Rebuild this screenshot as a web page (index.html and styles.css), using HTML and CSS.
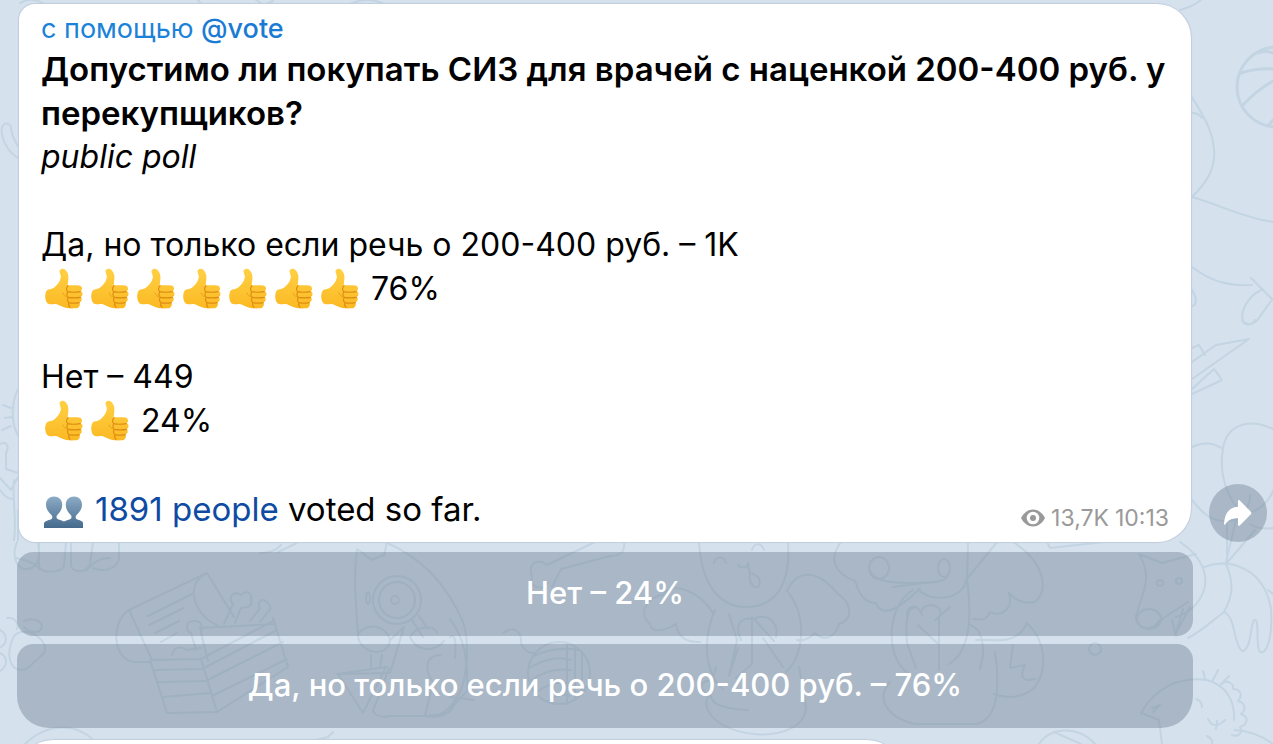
FILE: index.html
```html
<!DOCTYPE html>
<html lang="ru">
<head>
    <meta charset="UTF-8">
    <meta name="viewport" content="width=device-width, initial-scale=1.0">
    <title>Public poll</title>
    <link rel="stylesheet" href="styles.css">
</head>
<body>
    <!-- shared emoji -->
    <svg class="sprite" aria-hidden="true">
        <defs>
            <linearGradient id="skin" x1="0" y1="0" x2="0" y2="1">
                <stop offset="0" stop-color="#ffd044"/>
                <stop offset="1" stop-color="#fbb923"/>
            </linearGradient>
            <linearGradient id="bust" x1="0" y1="0" x2="0" y2="1">
                <stop offset="0" stop-color="#8cabc5"/>
                <stop offset="1" stop-color="#456a8d"/>
            </linearGradient>
            <symbol id="thumb" viewBox="0 1 46 44">
                <path fill="url(#skin)" d="M18.500 6c-.4-3 3.500-4.400 6-2 3 3 3.400 7 2.600 11.500l-.4 3.800h9.600c2.800 0 4.700 1.200 4.700 3.200 0 1.300-.6 2.200-1.500 2.800 1.700.7 2 1.800 2 3s-.8 2.400-2 2.800c1 .8 1.400 1.600 1.200 2.700-.2 1.400-1.200 2.300-2.500 2.600.7.6.9 1.400.6 2.500-.4 2-2 3.400-4.400 3.400-4.800.2-10 .2-14-2.100-3-1.400-4-2.500-6.600-2.300-3 .2-5.600.7-7.300-.7-2.800-2.500-3-10-.7-12.700 1.600-1.700 4.500-.7 6.700-2.400 3.300-2.500 6.500-6.300 7.300-10.400.4-2.200-.9-3.800-1.300-6z"/>
                <path fill="none" stroke="#de8d12" stroke-width="1.200" stroke-linecap="round" d="M27 20c-1.800 1.500-2 4.300-.2 5.700 3 .6 9 .5 12.400 0M27 25.700c-1.500 1.500-1.500 4.300.3 5.600 3.500.6 9 .5 12.200 0M27.300 31.300c-1.300 1.500-1 4 .6 5.300 3 .6 7.500.6 10.300 0M28 36.600c-.7 2-.2 3.600 1 4.800"/>
                <path fill="none" stroke="#eda21a" stroke-linecap="round" d="M22 27c1 2.500 2.500 3.500 4.200 4"/>
            </symbol>
            <symbol id="busts" viewBox="0 1 46 44">
                <path fill="url(#bust)" d="M3 42v-5c1-2.500 6-2.600 8-4.500.7-.9.3-2.500-.5-3.600C7.500 26.500 5 23 5 18.500 5 13.500 8.500 10.500 13 10.500s8.200 3 8.200 8c0 4.500-2 7.600-5 10.500-.8 1-1 2.800-.2 3.600 1.700 1.400 4.700 1.700 7 2.900 2.300-1.200 5.300-1.500 7-2.900.8-.8.6-2.600-.2-3.600-3-3-5-6-5-10.500 0-5 3.700-8 8.200-8s8 3 8 8c0 4.500-2.500 8-5.500 10.400-.8 1.100-1.200 2.700-.5 3.600 2 1.900 7 2 7 4.500v5z"/>
            </symbol>
        </defs>
    </svg>

    <!-- wallpaper doodles -->
    <svg class="wallpaper" viewBox="0 0 1273 744" preserveAspectRatio="xMidYMid slice" aria-hidden="true">
        <g class="doodle">
            <!-- top edge -->
            <path d="M20 3q14-8 28 4M198 0q5 8 14 4M256 0l8 5 9-4M350 4q18-8 34 0M1180 10q12-3 21-10"/>
            <!-- left edge -->
            <path d="M20 159C8 153 0 138 2 127c3-7 10-2 9 2 1 7 4 13 9 20M20 386c-9 13-10 38-1 51M3 405l8 3M5 418l7-1M2 430l9-4M0 444c8-4 9 4 6 9v16l12 4M0 478l11 12 7-13M0 490q6 9 13 9M14 480c-2 20 3 40 0 60M18 510v30"/>
            <!-- ball -->
            <circle class="bold" cx="1277" cy="87" r="40"/>
            <path class="bold" d="M1241 73q16-5 32-4M1243 105q13-14 30-24M1258 53q8-3 15 0M1269 125l4-5"/>
            <!-- shark -->
            <path d="M1191 96c11 17 21 32 23 53s-9 35-22 48c28 8 52 21 81 25M1192 113q7 0 10 5M1192 267c20 15 36 19 60 18M1251 278l22 22M1261 290c-14 7-21 22-18 31 6 7 14 1 18-6l10-14M1192 290c5 8 5 15 0 16M1242 320c2 6 10 6 13 0"/>
            <!-- paper plane -->
            <path d="M1192 362l24-17 33-6-57 40M1192 348l7-3 6 10M1192 394l30-14-8-11M1214 369l-22 20"/>
            <!-- balloons -->
            <path d="M1192 447q17-8 31 2M1192 500c13 17 24 24 43 20 10-4 15-15 15-25M1223 449c3-23 24-32 50-20M1223 449c-5 27 6 49 15 60M1240 515c15-2 27-10 33-24M1227 520v40M1236 520l-10 42M1255 530l-29 34M1250 524q9 6 23 4"/>
            <!-- donkey -->
            <path d="M1139 554c15 24 2 42-3 62-1 14 17 16 23 5l29-19M1139 554l23 9 34-9M1180 542c20 13 29 31 24 48-5 15-17 24-28 27M1204 567c25-9 60 0 67 42 2 30-5 46-11 43-5-5 0-32-5-32-5 0-3 31-13 31-9-7-6-34-18-39-12 9-22 19-36 26M1226 564c9 21 6 33-2 48M1172 620l4 16M1183 609l-7 24 14-26M1268 590l5 4"/>
            <ellipse cx="1149" cy="619" rx="12" ry="10"/>
            <circle cx="1160" cy="583" r="3"/><circle cx="1179" cy="581" r="3"/>
            <!-- sheep -->
            <path d="M1141 713l18 7 3 24M1141 713c14-25 38-37 66-33 18 5 28 19 27 40M1153 712l7-7-8 3M1196 699q6 2 6 8M1208 719c4 8 10 8 17 1M1217 721l-1 8M1207 736q6 3 5 8M1205 679l-2-8M1213 680l5-10M1221 684l8-8M1222 684c4-5 12-1 11 5 8 0 10 7 5 12 8 2 8 9 3 13 9 3 6 11-1 13 4 7-3 10-8 8M1235 730q20 1 38 14M1039 744c12-18 40-18 56 0M1054 732l27 12"/>
            <!-- paw -->
            <path d="M17 542c-6 15 0 27 9 27 11 0 15-9 12-27M39 542v24c2 8 23 7 25 0l2-24M71 542v24c3 8 17 6 19-2l3-22M93 568c10 4 22 2 26-8V542M16 558c13 2 23 8 24 12M87 570q10-13 23-12"/>
            <path d="M7 618c6-1 13 4 10 11M24 621c8-4 18 0 18 6-2 8-14 5-18 0M14 636c7-8 24-4 30 8 4 10-4 12-11 19-7 10-20 9-23-3-2-8 0-16 4-24M0 630c6 3 9 12 1 17M0 653c8 4 8 13 0 18"/>
            <!-- box of bones -->
            <path d="M129 610l78-37 27 44M129 610l23 50M129 610c-18 11-17 48 4 52h17M207 573c-23 10-14 43 12 53M148 616l44-22M149 625l35-17M155 633l24-12M161 642l16-9M150 660l17 53 50-1 71-45-15-49M150 660l51-1 72-38M201 659l16 53M154 670l49-1M159 682l47-1M163 697l48-4M204 668l73-38M208 680l75-38M212 696l75-37M200 628l75-4M200 628l8 33"/>
            <path d="M224 624l9-20c-6-7 1-14 8-9 6-6 12-1 10 5 3 7-7 8-10 8l-6 15M250 621l10-13c-4-7 3-10 7-6 5 5 4 8 0 11l-7 9M196 650l-5-17c-6-2-5-12 2-12 10-1 9 6 8 11l3 14M172 655c2-9 10-9 15-5l14-2"/>
            <!-- detective cat -->
            <path d="M357 549l15 11 13-6M357 549c-4 30-1 54 1 86M385 542c31 13 60 38 78 80 7 20 4 55-3 70-9 17-18 25-30 23M387 542l-3 14M358 635c0 18 31 25 32 4-6-16-26-16-32-4M390 640l14-13-14 46-52 1 25 39 22-44M337 674l50-7M371 655v12M382 655l-2 12M389 668l-14 38c-7 9 7 12 15 10h35c15 3 28-3 30-14M412 620l11 17M419 616l9 13M410 637c6-11 24-13 27-4M410 637c5 12 22 18 34 4M441 655c-16 0-17 15-8 27l-8 34M260 553q14 0 21-8M278 552l19-9"/>
            <circle cx="397" cy="600" r="24"/><circle cx="397" cy="600" r="18"/>
            <circle cx="395" cy="600" r="4"/><ellipse cx="368" cy="598" rx="2" ry="6"/>
            <!-- bone and yarn -->
            <path d="M532 577c-5-17 9-18 15-12l48-23M552 587l9-18 49-13c13 0 15-6 14-14M532 577c-3 11 10 14 16 6M503 633c10-8 19-2 18 10 3 9 9 10 13 10"/>
            <circle cx="559" cy="673" r="31"/>
            <path d="M534 656q22-10 44-6M529 668q24-14 42-8M530 681q18-14 41-11M536 693q16-13 32-10M548 701q12-9 21-5M567 644v60M575 648v52M582 654v40"/>
            <!-- praying angel -->
            <path d="M699 542c3 48 24 65 47 65 28 0 45-20 42-65M714 563c2-7 9-8 12 0M752 550c2-7 9-8 12 0M738 565c3 4 10 3 10-2l2 12c-3 11 13 20 9 3l-7-5M715 610c-13 29-10 64 8 79M789 593c19 26 14 63-3 79M713 613c-13-21-40-33-50-18-13 0-27 17-13 29 2 11 18 5 26 0 2 15 12 18 24 18M787 591c10-22 30-22 50 2 16 11 16 27 2 31-4 15-16 17-24 9-7 7-12 8-18 7M729 614l8 26-8 36 9-28M741 640c-8-17 2-23 12-21 16-7 26 5 23 18M752 617v47l-16 14M755 620l19 21M763 638l20 29M716 667l-10 36c4 37 98 45 100 4l-7-40M715 682c-15-5-19 8-4 14 0 9 17 13 37 14"/>
            <!-- rabbit -->
            <path d="M841 542c-12 16-8 31 14 39 4 12 9 22 21 22 3 9 10 9 18 6 15-8 22-18 26-20M893 587l31-4M966 580l31-38M968 542l-1 40M1013 542c30 19 37 46 22 60-10 2-18 0-26-9 5 18-10 24-19 19-3 9-11 8-17 7M870 571c5 12 27 12 46 12 21 0 29-2 31-6M918 589c13 15 46 10 48-9M967 580c5 36 4 71-18 84M913 590c-26 15-29 67-5 83M914 608c-9 0-8 25-7 35l9 25M922 615c-4-12-16-10-15 0M922 610c2-8 25-6 17 8v52M935 620l15-13M918 625l19 18M890 682c-18 21 6 39 25 42h62c19-5 24-30 18-72M970 625c11 3 17 21 10 44M976 640l15 0c20 2 31-5 36-17 19 18 21 45 8 64-14 14-34 10-41 7M1013 645l-3 23 15-3c-6 13-2 17 10 14"/>
            <ellipse cx="879" cy="568" rx="10" ry="11"/><ellipse cx="944" cy="568" rx="6" ry="9"/>
            <circle cx="1095" cy="649" r="6"/>
            <!-- bits between the drawings -->
            <path d="M1048 544l2 4 63-7M450 619c15 20 18 40 17 72l-17 18M450 697l24 3M25 744c23-22 53-22 72 0M308 742l20-5 5-5M450 637q7-6 5 21"/>
        </g>
    </svg>

    <main class="chat">
        <article class="message">
            <div class="via">с помощью <a href="#">@vote</a></div>
            <h1 class="question">Допустимо ли покупать СИЗ для врачей с наценкой 200-400 руб. у перекупщиков?</h1>
            <p class="kind">public poll</p>

            <section class="answer">
                <p>Да, но только если речь о 200-400 руб. – 1K</p>
                <p class="score">
                    <svg class="emoji"><use href="#thumb"/></svg>
                    <svg class="emoji"><use href="#thumb"/></svg>
                    <svg class="emoji"><use href="#thumb"/></svg>
                    <svg class="emoji"><use href="#thumb"/></svg>
                    <svg class="emoji"><use href="#thumb"/></svg>
                    <svg class="emoji"><use href="#thumb"/></svg>
                    <svg class="emoji"><use href="#thumb"/></svg>
                    <span class="percent">76%</span>
                </p>
            </section>

            <section class="answer">
                <p>Нет – 449</p>
                <p class="score">
                    <svg class="emoji"><use href="#thumb"/></svg>
                    <svg class="emoji"><use href="#thumb"/></svg>
                    <span class="percent">24%</span>
                </p>
            </section>

            <footer class="summary">
                <svg class="emoji"><use href="#busts"/></svg>
                <p class="voters"><a href="#">1891 people</a> voted so far.</p>
                <div class="meta">
                    <svg class="eye" viewBox="0 0 24 18" aria-hidden="true">
                        <path fill="#999" fill-rule="evenodd" d="M0 9C3 3.500 7 .5 12 .5S21 3.500 24 9c-3 5.500-7 8.500-12 8.500S3 14.500 0 9zm12-6.300a6.300 6.300 0 1 0 0 12.600 6.300 6.300 0 0 0 0-12.600z"/>
                        <circle cx="12" cy="9" r="3" fill="#999"/>
                    </svg>
                    <span>13,7K</span>
                    <time>10:13</time>
                </div>
            </footer>
        </article>

        <button class="share" type="button" aria-label="Share">
            <svg viewBox="0 0 28 26" aria-hidden="true">
                <path fill="#fff" d="M14 1.200c0-1.200 1-1.500 1.800-.7l11 11.300c.8.800.8 1.600 0 2.400l-11 11.200c-.8.800-1.800.4-1.800-.7v-6.500C8 18 4 20 1.500 24.200c-.6.900-1.400.7-1.400-.5C.5 14 5 7.200 14 6.700z"/>
            </svg>
        </button>

        <div class="options">
            <button class="option" type="button">Нет – 24%</button>
            <button class="option" type="button">Да, но только если речь о 200-400 руб. – 76%</button>
        </div>

        <div class="next-message"></div>
    </main>
</body>
</html>
```

FILE: styles.css
```css
* {
    box-sizing: border-box;
}

body {
    margin: 0;
    height: 100vh;
    overflow: hidden;
    background: #d6e1ee;
    color: #000;
    font-family: Inter, "Liberation Sans", sans-serif;
    font-size: 32px;
    line-height: 44px;
}

h1,
p {
    margin: 0;
}

a {
    color: #0f4ba3;
    text-decoration: none;
}

button {
    border: none;
    font: inherit;
    color: #fff;
    background: rgba(115, 132, 151, 0.45);
    cursor: pointer;
}

.sprite {
    position: absolute;
    width: 0;
    height: 0;
}

.wallpaper {
    position: absolute;
    top: 0;
    left: 0;
    width: 100%;
    height: 100%;
    z-index: -1;
}

.doodle {
    fill: none;
    stroke: #c3d4e2;
    stroke-width: 2;
    stroke-linecap: round;
    stroke-linejoin: round;
}

.doodle .bold {
    stroke-width: 3;
}

.chat {
    display: grid;
    grid-template-columns: 1fr 58px;
    column-gap: 16px;
    padding: 4px 6px 0 17px;
}

.message {
    margin: 0 2px;
    padding: 6px 22px 11px;
    background: #fff;
    border-radius: 16px 34px 34px 16px;
    box-shadow: 0 0 1px 1px #c0cddb;
}

.via {
    font-size: 27px;
    line-height: 37px;
    color: #1a82d8;
}

.via a {
    color: #1a7bd4;
    font-weight: 500;
}

.question {
    font-size: 33px;
    line-height: 44px;
    font-weight: 600;
}

.kind {
    font-style: italic;
}

.answer,
.summary {
    margin-top: 44px;
}

.score,
.summary,
.meta {
    display: flex;
    align-items: center;
}

.emoji {
    flex: none;
    width: 46px;
    height: 44px;
}

.percent {
    margin-left: 8px;
}

.voters {
    margin-left: 8px;
    font-size: 33px;
}

.meta {
    gap: 6px;
    margin-left: auto;
    padding-top: 18px;
    font-size: 23px;
    line-height: 26px;
    color: #999;
}

.eye {
    width: 24px;
    height: 18px;
}

.share {
    display: flex;
    align-items: center;
    justify-content: center;
    align-self: end;
    width: 58px;
    height: 58px;
    padding: 0;
    border-radius: 50%;
}

.share svg {
    width: 28px;
    height: 26px;
}

.options {
    grid-column: 1;
    display: flex;
    flex-direction: column;
    gap: 8px;
    margin-top: 10px;
}

.option {
    min-height: 84px;
    padding: 0 20px 2px;
    border-radius: 16px;
    font-size: 31px;
    font-weight: 500;
}

.option:last-child {
    border-radius: 16px 16px 32px 32px;
}

.next-message {
    grid-column: 1;
    width: 75%;
    height: 88px;
    margin: 12px 2px 0;
    background: #fff;
    border-radius: 34px;
    box-shadow: 0 0 1px 1px #c0cddb;
}
```
